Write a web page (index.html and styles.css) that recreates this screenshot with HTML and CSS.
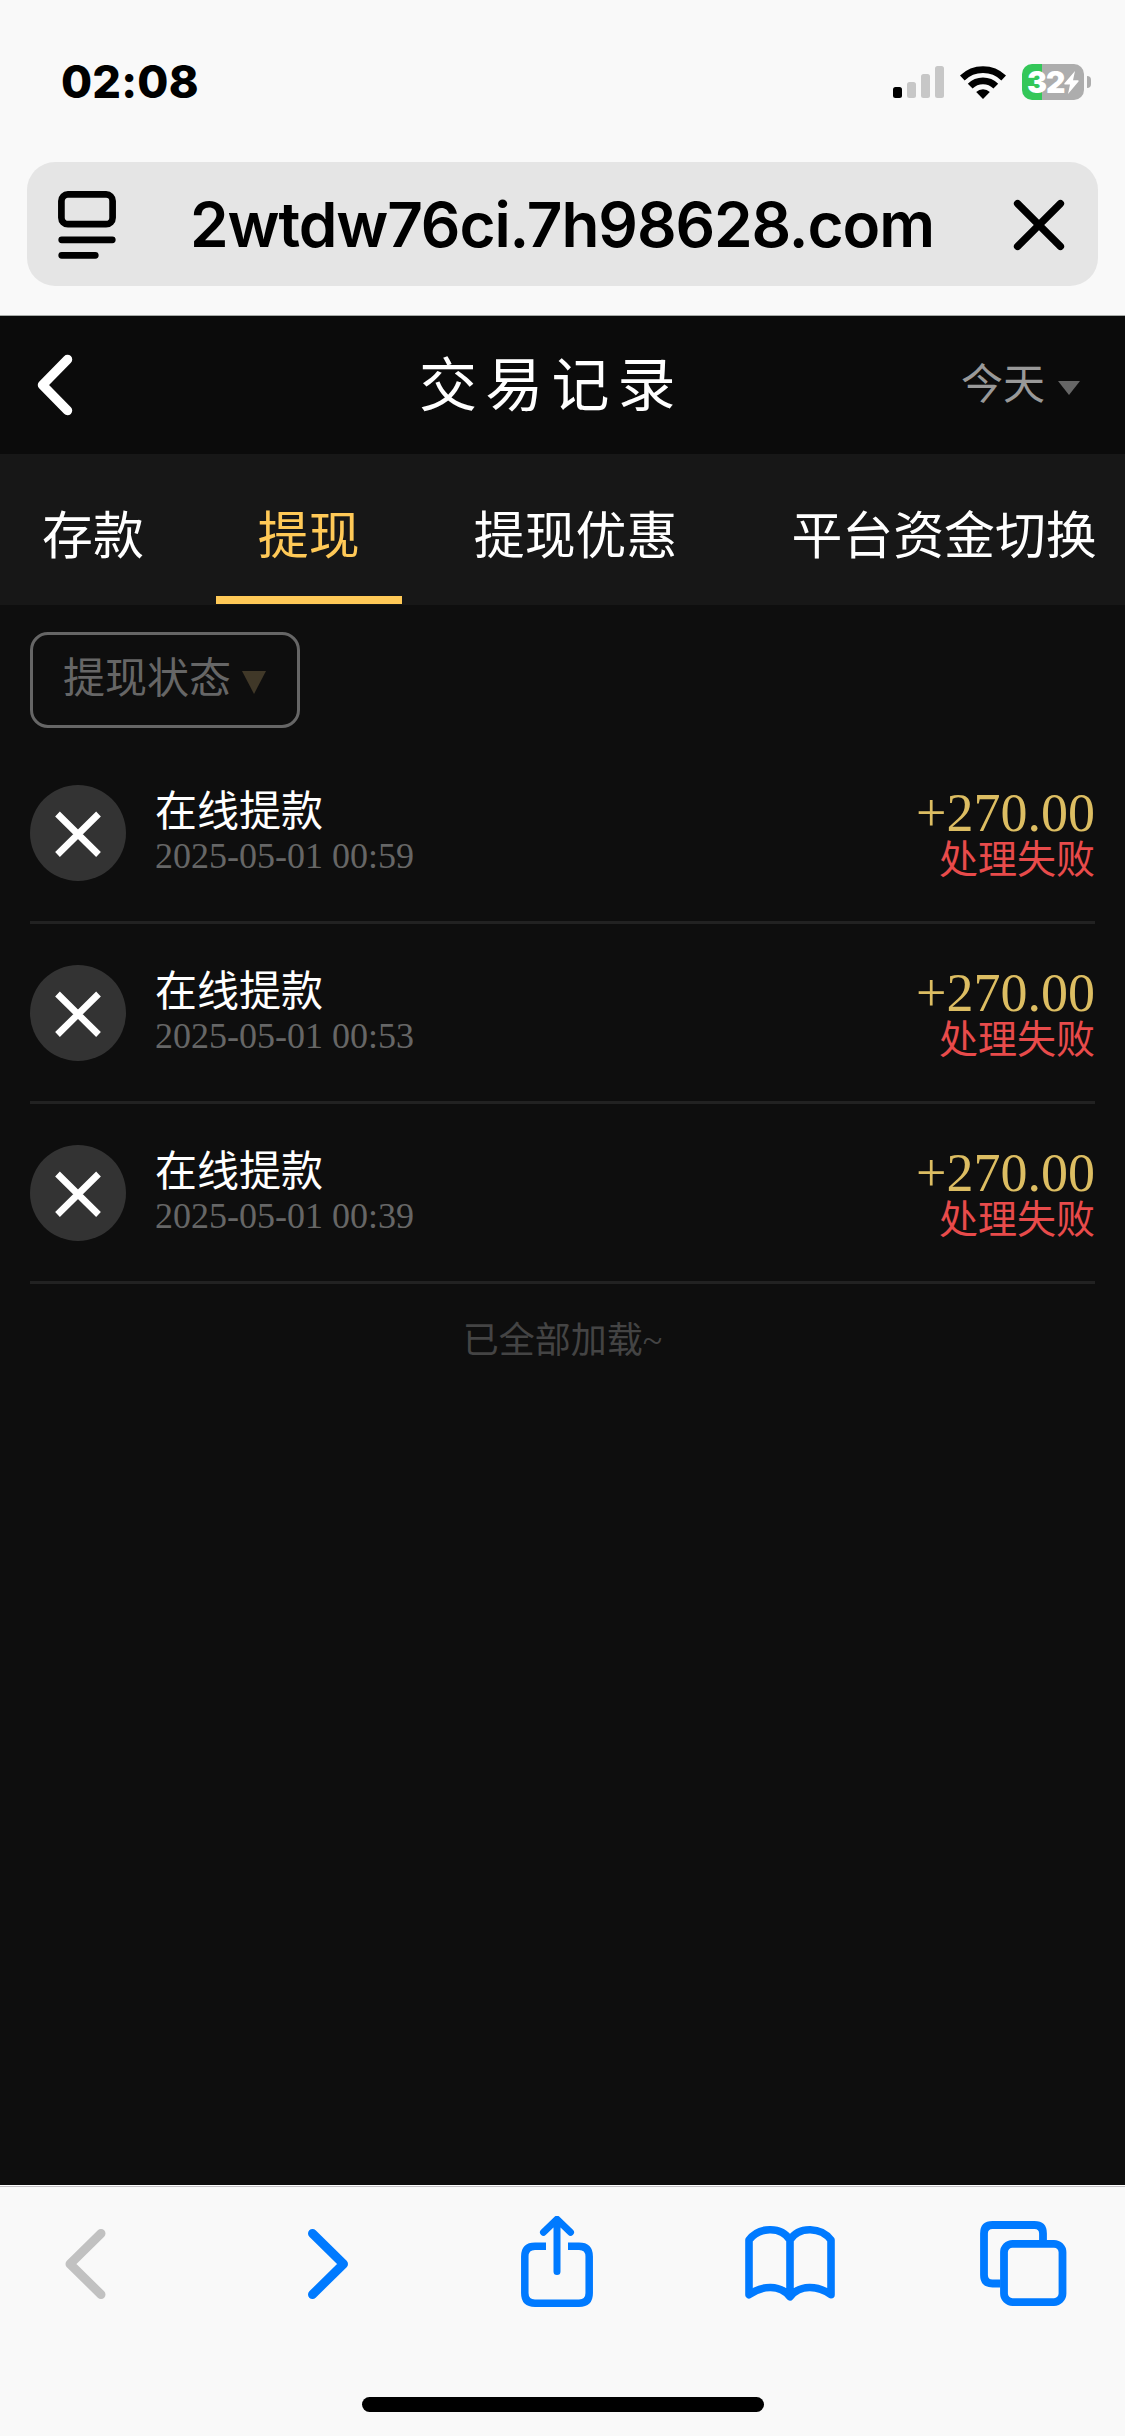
FILE: index.html
```html
<!DOCTYPE html>
<html lang="zh-CN">
<head>
<meta charset="utf-8">
<title>交易记录</title>
<link rel="stylesheet" href="styles.css">
</head>
<body>
<div class="browser-top">
  <div class="status-bar">
    <span class="time">02:08</span>
    <div class="status-icons">
      <svg class="signal" width="51" height="32" viewBox="0 0 51 32">
        <rect x="0" y="21" width="9" height="11" rx="2.5"/>
        <g fill="#c7c7c7"><rect x="14" y="16" width="9" height="16" rx="2.5"/><rect x="28" y="8" width="9" height="24" rx="2.5"/><rect x="42" y="0" width="9" height="32" rx="2.5"/></g>
      </svg>
      <svg class="wifi" width="46" height="33" viewBox="0 0 46 33">
        <g fill="none" stroke="#000" stroke-width="6.8"><path d="M2.3 12a29.8 29.8 0 0 1 41.4 0"/><path d="M10.2 20.2a18.2 18.2 0 0 1 25.6 0"/></g>
        <path d="M23 33l-6.8-6.9a9.6 9.6 0 0 1 13.6 0z"/>
      </svg>
      <div class="battery">
        <div class="battery-body"><span>32</span><svg width="15" height="23" viewBox="0 0 15 23"><path fill="#fff" d="M11 0L.5 12.3q-.8 1.2.5 1.2h5L4 23 14.5 10.5q.8-1.2-.6-1.2H9z"/></svg></div>
        <div class="battery-tip"></div>
      </div>
    </div>
  </div>
  <div class="address-bar">
    <svg width="58" height="68" viewBox="0 0 58 68" fill="none" stroke="#000" stroke-width="6.7" stroke-linecap="round">
      <rect x="3.4" y="3.4" width="51.2" height="29.8" rx="6.5"/><path d="M3.7 48.8h50.6M3.7 64.300h33.600"/>
    </svg>
    <span class="address">2wtdw76ci.7h98628.com</span>
    <svg width="52" height="52" viewBox="0 0 52 52" fill="none" stroke="#000" stroke-width="7.4" stroke-linecap="round"><path d="M4.6 4.6l42.8 42.8M47.4 4.6L4.6 47.4"/></svg>
  </div>
</div>
<header class="page-header">
  <svg class="back" width="36" height="62" viewBox="0 0 36 62" fill="none" stroke="#fff" stroke-width="9.5" stroke-linecap="round" stroke-linejoin="round"><path d="M30.5 5.5L5.5 31l25 25.5"/></svg>
  <h1>交易记录</h1>
  <div class="date-filter"><span>今天</span><svg width="22" height="14" viewBox="0 0 22 14"><path fill="#666" d="M0 0h22L11 14z"/></svg></div>
</header>
<nav class="tabs">
  <a class="tab">存款</a>
  <a class="tab active">提现</a>
  <a class="tab">提现优惠</a>
  <a class="tab">平台资金切换</a>
</nav>
<main class="records">
  <button class="state-filter"><span>提现状态</span><svg width="24" height="23" viewBox="0 0 24 23"><path fill="#403828" d="M0 0h24L12 23z"/></svg></button>
  <article class="record">
    <svg class="record-icon" width="96" height="96" viewBox="0 0 96 96"><circle cx="48" cy="48" r="48" fill="#333"/><path d="M27.5 29l41 40.5M68.5 29l-41 40.5" stroke="#fff" stroke-width="6.7"/></svg>
    <div class="record-info"><div class="record-name">在线提款</div><time>2025-05-01 00:59</time></div>
    <div class="record-result"><div class="amount">+270.00</div><div class="state">处理失败</div></div>
  </article>
  <article class="record">
    <svg class="record-icon" width="96" height="96" viewBox="0 0 96 96"><circle cx="48" cy="48" r="48" fill="#333"/><path d="M27.5 29l41 40.5M68.5 29l-41 40.5" stroke="#fff" stroke-width="6.7"/></svg>
    <div class="record-info"><div class="record-name">在线提款</div><time>2025-05-01 00:53</time></div>
    <div class="record-result"><div class="amount">+270.00</div><div class="state">处理失败</div></div>
  </article>
  <article class="record">
    <svg class="record-icon" width="96" height="96" viewBox="0 0 96 96"><circle cx="48" cy="48" r="48" fill="#333"/><path d="M27.5 29l41 40.5M68.5 29l-41 40.5" stroke="#fff" stroke-width="6.7"/></svg>
    <div class="record-info"><div class="record-name">在线提款</div><time>2025-05-01 00:39</time></div>
    <div class="record-result"><div class="amount">+270.00</div><div class="state">处理失败</div></div>
  </article>
  <p class="list-end">已全部加载<span class="tilde">~</span></p>
</main>
<footer class="browser-bottom">
  <div class="toolbar">
    <svg width="41" height="92" viewBox="65 2216 41 92" stroke="#c1c1c1" stroke-width="9"><path d="M101 2233.5L70 2264l31 30.5"/></svg>
    <svg width="41" height="92" viewBox="308 2216 41 92" stroke-width="9"><path d="M312.5 2233.5l31 30.5-31 30.5"/></svg>
    <svg width="72" height="92" viewBox="521 2216 72 92" stroke-width="7.5"><path stroke-linecap="butt" d="M546 2246.2h-11q-10.2 0-10.2 10.2v36.6q0 10.2 10.2 10.2h44q10.2 0 10.2-10.2v-36.6q0-10.2-10.2-10.2h-11"/><path d="M557 2271.5V2220M543.5 2232.3l13.5-13 13.5 13" stroke-width="7"/></svg>
    <svg width="90" height="92" viewBox="745 2216 90 92" stroke-width="7.6"><path d="M749 2294.8V2240c9.5-13 32-14.5 41 0 9-14.5 31.5-13 41 0v54.800c-13-9.5-31-10.5-41 2-10-12.5-28-11.5-41-2zM790 2240v56"/></svg>
    <svg width="87" height="92" viewBox="980 2216 87 92" stroke-width="7.8"><rect x="1004" y="2243.8" width="58.5" height="58.3" rx="8.5"/><path stroke-linecap="butt" d="M1043 2240v-6.5q0-8.5-8.5-8.5h-42q-8.5 0-8.5 8.5v41.5q0 8.5 8.5 8.5h8"/></svg>
  </div>
  <div class="home-indicator"></div>
</footer>
</body>
</html>
```
FILE: styles.css
```css
* { box-sizing: border-box; }
body {
  margin: 0;
  width: 1125px;
  height: 2436px;
  display: flex;
  flex-direction: column;
  overflow: hidden;
  background: #0e0e0e;
  color: #fff;
  font-family: "Noto Sans CJK SC", sans-serif;
}
svg { display: block; flex: none; }

.browser-top {
  height: 316px;
  flex: none;
  background: #f9f9f9;
  border-bottom: 1px solid #a8aca9;
  color: #000;
  font-family: Inter, sans-serif;
}
.status-bar {
  height: 162px;
  padding: 2px 34px 0 61px;
  display: flex;
  align-items: center;
  justify-content: space-between;
}
.time { font-size: 45px; font-weight: 800; line-height: 54px; letter-spacing: 0.2px; }
.status-icons { display: flex; align-items: center; }
.signal { margin-right: 16px; }
.wifi { margin-right: 16px; }
.battery { display: flex; align-items: center; gap: 3px; }
.battery-body {
  width: 62px;
  height: 36px;
  border-radius: 10px;
  background: linear-gradient(90deg, #34c759 20px, #adadad 20px);
  display: flex;
  align-items: center;
  padding-left: 5px;
  color: #fff;
  font-size: 30px;
  font-weight: 900;
  line-height: 36px;
  letter-spacing: -1px;
}
.battery-tip { width: 4px; height: 12px; border-radius: 0 6px 6px 0; background: #adadad; }
.address-bar {
  margin: 0 27px;
  height: 124px;
  padding: 1px 33px 0 31px;
  border-radius: 28px;
  background: #e5e5e5;
  display: flex;
  align-items: center;
}
.address {
  flex: 1;
  padding-left: 74px;
  font-size: 62px;
  font-weight: 570;
  line-height: 76px;
  letter-spacing: -1.1px;
}

.page-header {
  height: 138px;
  flex: none;
  padding: 0 45px 0 37px;
  background: #0b0b0b;
  display: grid;
  grid-template-columns: 382px auto 1fr;
  align-items: center;
}
h1 { margin: 0; padding-bottom: 8px; font-size: 58px; font-weight: 400; line-height: 80px; letter-spacing: 8.2px; }
.date-filter {
  justify-self: end;
  display: flex;
  align-items: center;
  gap: 13px;
  color: #999;
  font-size: 42px;
  line-height: 60px;
}
.date-filter span { padding-bottom: 8px; }
.date-filter svg { margin-top: 6px; }
.tabs {
  height: 151px;
  flex: none;
  padding-bottom: 1px;
  background: #171717;
  display: flex;
  gap: 30px;
  white-space: nowrap;
  overflow: hidden;
}
.tab {
  flex: none;
  padding: 14px 42px 0;
  border-bottom: 8px solid transparent;
  font-size: 50.9px;
  line-height: 128px;
}
.tab.active { width: 186px; color: #ffc957; border-color: #ffc957; }

.records { flex: 1; padding: 27px 30px 0; }
.state-filter {
  width: 270px;
  height: 96px;
  padding: 0 0 0 30px;
  border: 3px solid #666;
  border-radius: 18px;
  background: transparent;
  color: #666;
  font: inherit;
  font-size: 42px;
  display: flex;
  align-items: center;
  gap: 11px;
  margin-bottom: 16px;
}
.state-filter span { padding-bottom: 11px; }
.state-filter svg { margin-top: 4px; }
.record {
  height: 180px;
  border-bottom: 3px solid #222;
  display: flex;
  align-items: center;
}
.record-info { margin-left: 29px; padding-bottom: 2px; flex: 1; }
.record-name { font-size: 42px; line-height: 40px; margin-bottom: 8px; }
time {
  display: block;
  color: #666;
  font: 36px/40px "Liberation Serif", serif;
}
.record-result { text-align: right; }
.amount { color: #dcbd62; font: 54px/54px "Liberation Serif", serif; }
.state { color: #e84b4b; font-size: 39px; line-height: 32px; margin-bottom: 7px; }
.list-end {
  margin: 26px 0 0;
  color: #444;
  font-size: 36px;
  line-height: 54px;
  text-align: center;
}
.tilde { font-family: "Liberation Serif", serif; }

.browser-bottom {
  height: 251px;
  flex: none;
  background: #f9f9f9;
  border-top: 1px solid #fff;
  display: flex;
  flex-direction: column;
  align-items: center;
}
.toolbar {
  width: 100%;
  border-top: 1px solid #c3c1c4;
  padding: 29px 0 0 65px;
  display: grid;
  grid-template-columns: 243px 213px 224px 235px auto;
  fill: none;
  stroke: #007aff;
  stroke-linecap: round;
  stroke-linejoin: round;
}
.home-indicator { margin-top: 89px; width: 402px; height: 15px; border-radius: 8px; background: #000; }
```
